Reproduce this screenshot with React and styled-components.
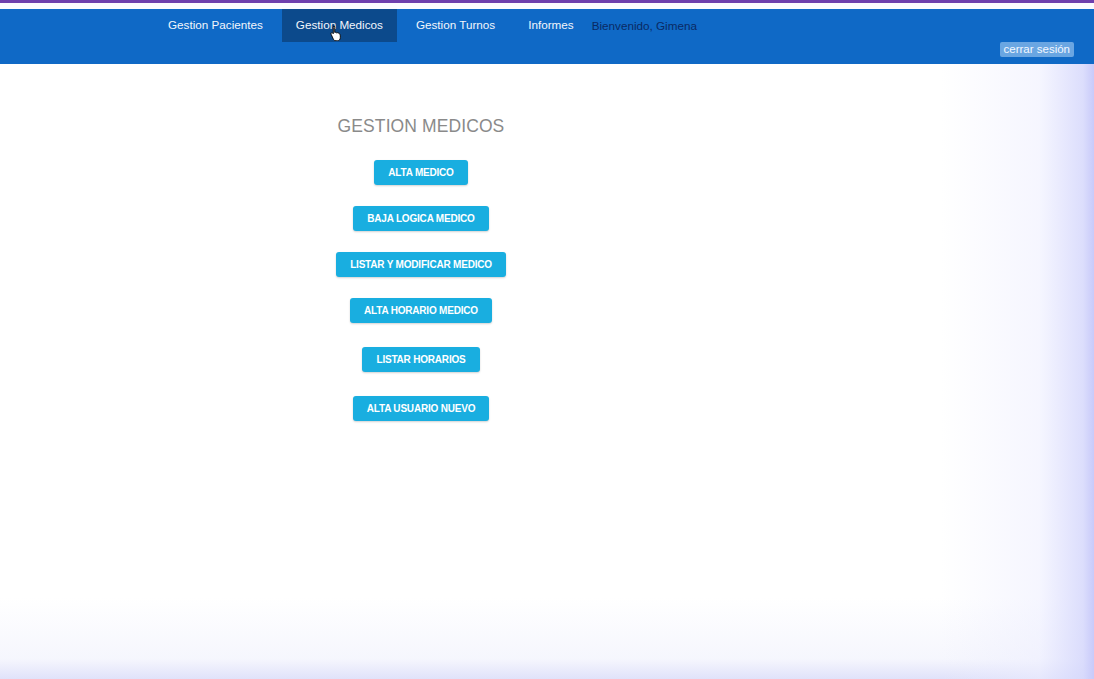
import React from 'react';
import styled, { createGlobalStyle } from 'styled-components';

const GlobalStyle = createGlobalStyle`
  html, body {
    margin: 0;
    padding: 0;
    font-family: "Liberation Sans", Arial, sans-serif;
    background: #fff;
  }
`;

const menu = ['Gestion Pacientes', 'Gestion Medicos', 'Gestion Turnos', 'Informes'];

const actions = [
  { label: 'ALTA MEDICO', gap: 0 },
  { label: 'BAJA LOGICA MEDICO', gap: 21 },
  { label: 'LISTAR Y MODIFICAR MEDICO', gap: 21 },
  { label: 'ALTA HORARIO MEDICO', gap: 21 },
  { label: 'LISTAR HORARIOS', gap: 24 },
  { label: 'ALTA USUARIO NUEVO', gap: 24 },
];

const HandCursor = () => (
  <svg width="12" height="16" viewBox="0 0 12 16">
    <path
      d="M3.5 1.2c.7 0 1.2.5 1.2 1.2v5l.3-.1c.6-.2 1.2 0 1.5.5.5-.3 1.2-.2 1.6.3.5-.2 1.1 0 1.4.5l.3.5c.3.5.5 1.2.5 1.8v1.8c0 1.8-1.2 3.1-3 3.1H6c-1 0-1.9-.5-2.5-1.3L1.2 9.4c-.4-.5-.3-1.2.2-1.5.4-.3 1-.3 1.3.1l.6.7V2.4c0-.7.5-1.2 1.2-1.2z"
      fill="#fff"
      stroke="#000"
      strokeWidth="0.9"
    />
  </svg>
);

const App = () => (
  <>
    <GlobalStyle />
    <Page>
      <TopLine />
      <NavBar>
        <NavList>
          {menu.map((item) => (
            <NavItem key={item} active={item === 'Gestion Medicos'}>
              {item}
              {item === 'Gestion Medicos' && (
                <Cursor>
                  <HandCursor />
                </Cursor>
              )}
            </NavItem>
          ))}
          <Welcome>Bienvenido, Gimena</Welcome>
        </NavList>
        <Logout>cerrar sesión</Logout>
      </NavBar>
      <Main>
        <Title>GESTION MEDICOS</Title>
        {actions.map(({ label, gap }) => (
          <ActionButton key={label} gap={gap}>
            {label}
          </ActionButton>
        ))}
      </Main>
    </Page>
  </>
);

const Page = styled.div`
  position: relative;
  min-height: 679px;
  background:
    linear-gradient(to right, rgba(255, 255, 255, 0) 86%, rgba(236, 237, 255, 0.5) 95%, rgba(214, 216, 252, 0.85) 99%, rgba(200, 202, 250, 1) 100%),
    linear-gradient(to bottom, rgba(255, 255, 255, 0) 88%, rgba(242, 243, 253, 0.7) 97%, rgba(224, 226, 250, 1) 100%),
    #fff;
`;

const TopLine = styled.div`
  height: 3px;
  background: #6e3fae;
  border-bottom: 6px solid #fbfbff;
`;

const NavBar = styled.nav`
  height: 55px;
  background: #0f69c6;
  display: flex;
  justify-content: space-between;
  align-items: flex-start;
  padding-left: 154px;
  padding-right: 20px;
`;

const NavList = styled.ul`
  display: flex;
  align-items: center;
  gap: 5px;
  margin: 0;
  padding: 0;
  list-style: none;
  height: 33px;
`;

const NavItem = styled.li`
  position: relative;
  height: 33px;
  line-height: 32px;
  padding: 0 14px;
  font-size: 11.7px;
  color: #f2f6fc;
  background: ${({ active }) => (active ? '#0c4a8c' : 'transparent')};
`;

const Cursor = styled.span`
  position: absolute;
  left: 48px;
  top: 16px;
  line-height: 0;
`;

const Welcome = styled.li`
  font-size: 11.7px;
  color: #0a2a64;
  line-height: 32px;
  margin-left: -1px;
`;

const Logout = styled.button`
  margin-top: 33px;
  height: 15px;
  padding: 0 4px;
  border: none;
  border-radius: 2px;
  background: #6aa6e2;
  color: #f4f8ff;
  font-family: "Liberation Sans", Arial, sans-serif;
  font-size: 11.5px;
  line-height: 15px;
`;

const Main = styled.main`
  width: 842px;
  display: flex;
  flex-direction: column;
  align-items: center;
  padding-top: 52px;
`;

const Title = styled.h2`
  margin: 0 0 23px;
  font-size: 17.5px;
  font-weight: normal;
  color: #8a8a8a;
  letter-spacing: 0.1px;
`;

const ActionButton = styled.button`
  margin-top: ${({ gap }) => gap}px;
  height: 25px;
  padding: 0 14px;
  border: none;
  border-radius: 3px;
  background: #19aee0;
  color: #fff;
  font-family: "Liberation Sans", Arial, sans-serif;
  font-size: 10px;
  font-weight: bold;
  letter-spacing: -0.2px;
  box-shadow: 0 1px 2px rgba(0, 0, 0, 0.18);
`;

export default App;
